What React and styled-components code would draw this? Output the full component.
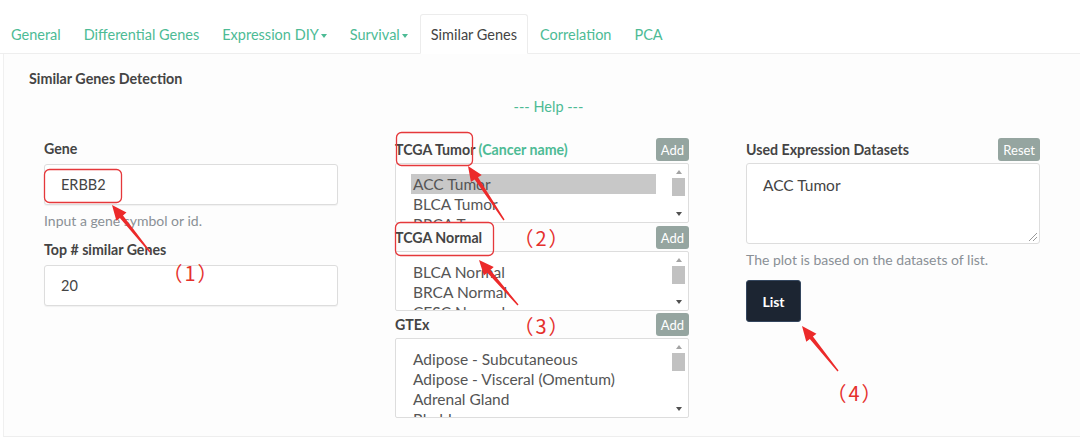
import React from 'react';
import styled, { createGlobalStyle } from 'styled-components';

const GlobalStyle = createGlobalStyle`
	body {
		margin: 0;
		background: #fff;
		font-family: Lato, "Noto Sans", sans-serif;
		color: #333;
	}
`;

const tabs = [
	{ label: 'General' },
	{ label: 'Differential Genes' },
	{ label: 'Expression DIY', caret: true },
	{ label: 'Survival', caret: true },
	{ label: 'Similar Genes', active: true },
	{ label: 'Correlation' },
	{ label: 'PCA' },
];

const lists = [
	{ title: 'TCGA Tumor', hint: '(Cancer name)', gap: 0, height: 60, items: ['ACC Tumor', 'BLCA Tumor', 'BRCA Tumor'], selected: 0 },
	{ title: 'TCGA Normal', gap: 4, height: 60, items: ['BLCA Normal', 'BRCA Normal', 'CESC Normal'] },
	{ title: 'GTEx', gap: 3, height: 80, items: ['Adipose - Subcutaneous', 'Adipose - Visceral (Omentum)', 'Adrenal Gland', 'Bladder'] },
];

// annotation arrows: tail -> tip
const arrows = [
	[150, 252, 112, 205],
	[504, 220, 468, 166],
	[518, 305, 479, 260],
	[838, 371, 802, 326],
];
const boxes = [
	[44, 169, 77, 33],
	[396, 132, 76, 33],
	[395, 222, 98, 33],
];
// centre points of the numbered marks
const marks = [
	[191, 273, '（1）'],
	[542, 238, '（2）'],
	[542, 326, '（3）'],
	[855, 393, '（4）'],
];

function arrowPoints(tx, ty, hx, hy) {
	const len = Math.hypot(hx - tx, hy - ty);
	const dx = (hx - tx) / len;
	const dy = (hy - ty) / len;
	const nx = -dy;
	const ny = dx;
	const bx = hx - dx * 15;
	const by = hy - dy * 15;
	const p = (x, y, w) => `${x + nx * w},${y + ny * w}`;
	return [
		p(tx, ty, 0.7),
		p(bx, by, 2),
		p(bx, by, 6.5),
		`${hx},${hy}`,
		p(bx, by, -6.5),
		p(bx, by, -2),
		p(tx, ty, -0.7),
	].join(' ');
}

const App = () => {
	return (
		<Page>
			<GlobalStyle />
			<Tabs>
				{tabs.map((t) => (
					<Tab key={t.label} $active={t.active}>
						{t.label}
						{t.caret && <Caret />}
					</Tab>
				))}
			</Tabs>
			<Panel>
				<PanelTitle>Similar Genes Detection</PanelTitle>
				<Help>--- Help ---</Help>
				<Columns>
					<Column>
						<Label $top={1}>Gene</Label>
						<Input>ERBB2</Input>
						<HelpText>Input a gene symbol or id.</HelpText>
						<Label $top={12}>Top # similar Genes</Label>
						<Input>20</Input>
					</Column>
					<Column>
						{lists.map((l) => (
							<ListGroup key={l.title} $gap={l.gap}>
								<LabelRow>
									<Label>
										{l.title} {l.hint && <Hint>{l.hint}</Hint>}
									</Label>
									<SmallButton>Add</SmallButton>
								</LabelRow>
								<ListBox $height={l.height}>
									<Options>
										{l.items.map((it, k) => (
											<Option key={it} $selected={l.selected === k}>
												{it}
											</Option>
										))}
									</Options>
									<Scrollbar>
										<ScrollArrow $up />
										<Thumb />
										<ScrollArrow />
									</Scrollbar>
								</ListBox>
							</ListGroup>
						))}
					</Column>
					<Column>
						<LabelRow>
							<Label>Used Expression Datasets</Label>
							<SmallButton>Reset</SmallButton>
						</LabelRow>
						<TextArea>
							ACC Tumor
							<Grip />
						</TextArea>
						<HelpText>The plot is based on the datasets of list.</HelpText>
						<ListButton>List</ListButton>
					</Column>
				</Columns>
			</Panel>

			<Overlay width="1080" height="447">
				{boxes.map(([x, y, w, h]) => (
					<rect key={`${x}-${y}`} x={x + 0.5} y={y + 0.5} width={w} height={h} rx="5" fill="none" stroke="#e5383b" strokeWidth="1.3" />
				))}
				{arrows.map(([tx, ty, hx, hy]) => (
					<polygon key={`${tx}-${ty}`} points={arrowPoints(tx, ty, hx, hy)} fill="#ec2a2a" />
				))}
			</Overlay>
			{marks.map(([x, y, t]) => (
				<Mark key={t} $x={x} $y={y}>
					{t}
				</Mark>
			))}
		</Page>
	);
};

export default App;

const Page = styled.div`
	position: relative;
	width: 1080px;
	height: 447px;
	overflow: hidden;
`;
const Tabs = styled.div`
	display: flex;
	align-items: flex-end;
	height: 54px;
	border-bottom: 1px solid #eeeeee;
	box-sizing: border-box;
`;
const Tab = styled.div`
	display: flex;
	align-items: center;
	height: 40px;
	box-sizing: border-box;
	padding: 1px 10px 0;
	margin-right: 1px;
	margin-bottom: -1px;
	font-size: 14.5px;
	color: ${(p) => (p.$active ? '#444' : '#4dbb95')};
	background: ${(p) => (p.$active ? '#fff' : 'transparent')};
	border: 1px solid ${(p) => (p.$active ? '#ececec' : 'transparent')};
	border-bottom-color: ${(p) => (p.$active ? '#fff' : 'transparent')};
	border-radius: 3px 3px 0 0;
`;
const Caret = styled.span`
	display: inline-block;
	margin-left: 2px;
	margin-top: 2px;
	border-left: 3.5px solid transparent;
	border-right: 3.5px solid transparent;
	border-top: 4px solid #4dbb95;
`;
const Panel = styled.div`
	margin-left: 3px;
	height: 383px;
	box-sizing: border-box;
	background: #fdfdfd;
	border-left: 1px solid #f0f0f0;
	border-bottom: 1px solid #eeeeee;
	padding: 16px 0 0 25px;
`;
const PanelTitle = styled.div`
	font-size: 14.3px;
	font-weight: 700;
	color: #444;
	line-height: 18px;
`;
const Help = styled.div`
	text-align: center;
	margin: 11px 0 0 -12px;
	font-size: 14.5px;
	line-height: 16px;
	color: #4dbb95;
`;
const Columns = styled.div`
	display: grid;
	grid-template-columns: repeat(3, 294px);
	column-gap: 57px;
	margin: 24px 0 0 15px;
	align-items: start;
`;
const Column = styled.div`
	display: flex;
	flex-direction: column;
	align-items: flex-start;
`;
const Label = styled.div`
	font-size: 14.2px;
	font-weight: 700;
	color: #444;
	line-height: 18px;
	white-space: nowrap;
	margin-top: ${(p) => p.$top || 0}px;
`;
const Hint = styled.span`
	color: #4dbb95;
`;
const Input = styled.div`
	align-self: stretch;
	height: 41px;
	margin-top: 6px;
	box-sizing: border-box;
	padding: 0 16px;
	display: flex;
	align-items: center;
	font-size: 14.5px;
	color: #444;
	background: #fff;
	border: 1px solid #dddddd;
	border-radius: 3px;
	box-shadow: 0 1px 1px rgba(0, 0, 0, 0.05);
`;
const HelpText = styled.div`
	margin-top: 8px;
	font-size: 14px;
	line-height: 16px;
	color: #8a9096;
`;
const ListGroup = styled.div`
	align-self: stretch;
	margin-top: ${(p) => p.$gap}px;
`;
const LabelRow = styled.div`
	align-self: stretch;
	display: flex;
	justify-content: space-between;
	align-items: center;
	height: 23px;
	margin-top: -1px;
`;
const SmallButton = styled.div`
	height: 23px;
	padding: 0 5px;
	display: flex;
	align-items: center;
	font-size: 13px;
	color: #fff;
	background: #95a5a0;
	border-radius: 3px;
`;
const ListBox = styled.div`
	position: relative;
	height: ${(p) => p.$height}px;
	margin-top: 2px;
	box-sizing: border-box;
	background: #fff;
	border: 1px solid #dddddd;
	border-radius: 2px;
	overflow: hidden;
	display: flex;
`;
const Options = styled.div`
	flex: 1;
	padding: 10px 16px 0 15px;
`;
const Option = styled.div`
	height: 20px;
	line-height: 20px;
	padding-left: 2px;
	font-size: 15.5px;
	color: #555;
	white-space: nowrap;
	background: ${(p) => (p.$selected ? '#c8c8c8' : 'transparent')};
`;
const Scrollbar = styled.div`
	width: 13px;
	margin: 2px 3px 2px 0;
	display: flex;
	flex-direction: column;
	align-items: center;
	justify-content: space-between;
`;
const ScrollArrow = styled.div`
	width: 0;
	height: 0;
	margin: 4px 0;
	border-left: 3.5px solid transparent;
	border-right: 3.5px solid transparent;
	${(p) => (p.$up ? 'border-bottom: 4px solid #a3a3a3;' : 'border-top: 4px solid #505050;')}
`;
const Thumb = styled.div`
	width: 13px;
	flex: 1;
	max-height: 18px;
	margin-bottom: auto;
	background: #c1c1c1;
`;
const TextArea = styled.div`
	position: relative;
	align-self: stretch;
	height: 81px;
	margin-top: 2px;
	box-sizing: border-box;
	padding: 12px 16px;
	font-size: 15.5px;
	line-height: 18px;
	color: #444;
	background: #fff;
	border: 1px solid #dddddd;
	border-radius: 3px;
`;
const Grip = styled.span`
	position: absolute;
	right: 2px;
	bottom: 2px;
	width: 8px;
	height: 8px;
	background: linear-gradient(135deg, transparent 45%, #999 45%, #999 55%, transparent 55%, transparent 70%, #999 70%, #999 80%, transparent 80%);
`;
const ListButton = styled.div`
	margin-top: 12px;
	width: 55px;
	height: 42px;
	box-sizing: border-box;
	display: flex;
	align-items: center;
	justify-content: center;
	font-size: 14px;
	font-weight: 700;
	color: #fff;
	background: #1c2532;
	border: 1px solid #34465e;
	border-radius: 3px;
`;
const Overlay = styled.svg`
	position: absolute;
	left: 0;
	top: 0;
	pointer-events: none;
`;
const Mark = styled.span`
	position: absolute;
	left: ${(p) => p.$x}px;
	top: ${(p) => p.$y}px;
	transform: translate(-50%, -50%);
	font-family: "Noto Sans CJK SC", sans-serif;
	font-size: 20px;
	line-height: 24px;
	letter-spacing: 2px;
	white-space: nowrap;
	color: #e5302c;
`;
